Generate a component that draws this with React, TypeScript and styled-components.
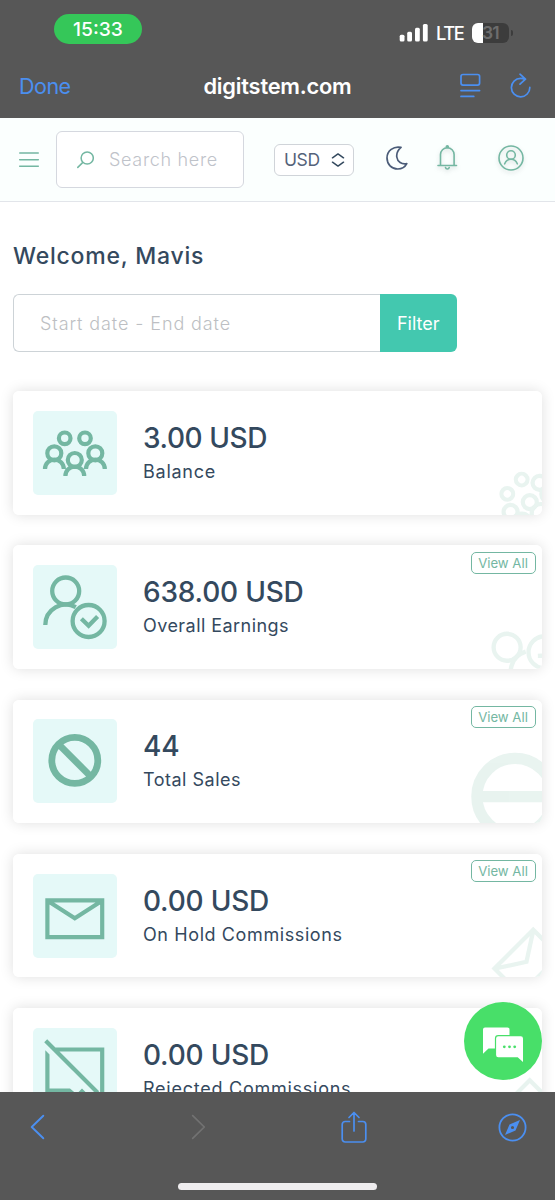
import React from "react";
import styled, { createGlobalStyle } from "styled-components";

const GlobalStyle = createGlobalStyle`
  *, *::before, *::after { box-sizing: border-box; }
  body { margin: 0; background: #fff; font-family: Inter, "Liberation Sans", sans-serif; }
  svg { display: block; flex: none; }
`;

const navy = "#34495e";
const sage = "#74b7a2";
const blue = "#4b8ff0";
const chrome = "#575757";

const Screen = styled.div`
  width: 555px;
  height: 1200px;
  display: flex;
  flex-direction: column;
  overflow: hidden;
  position: relative;
`;

const TopChrome = styled.header`
  height: 118px;
  flex: none;
  background: ${chrome};
  color: #fff;
`;

const StatusBar = styled.div`
  height: 58px;
  padding: 14px 42px 0 54px;
  display: flex;
  justify-content: space-between;
  align-items: flex-start;
`;

const TimePill = styled.div`
  width: 88px;
  height: 30px;
  border-radius: 15px;
  background: #35c759;
  font-size: 19.3px;
  font-weight: 500;
  line-height: 30px;
  text-align: center;
`;

const StatusRight = styled.div`
  display: flex;
  align-items: center;
  height: 20px;
  margin-top: 9px;
`;

const Network = styled.span`
  width: 27px;
  margin: 0 9px 0 8px;
  font-size: 18.3px;
  font-weight: 500;
  line-height: 20px;
  letter-spacing: -1.4px;
  white-space: nowrap;
`;

const Battery = styled.div`
  width: 37px;
  height: 20px;
  border-radius: 6px;
  background: linear-gradient(to right, #fff 0 11.5px, #3c3c3c 11.5px);
  color: #6d6d6d;
  font-size: 17.5px;
  font-weight: 600;
  line-height: 20px;
  padding-left: 10px;
  letter-spacing: -0.8px;
`;

const BatteryNub = styled.div`
  width: 2px;
  height: 6px;
  margin-left: 2px;
  border-radius: 0 2px 2px 0;
  background: #3c3c3c;
`;

const AddressRow = styled.div`
  height: 56px;
  padding: 0 24px 0 19px;
  display: grid;
  grid-template-columns: 147px 1fr 147px;
  align-items: center;
`;

const Done = styled.span`
  color: ${blue};
  font-size: 21.5px;
  letter-spacing: -0.5px;
`;

const Domain = styled.span`
  font-size: 21.8px;
  font-weight: 600;
  text-align: center;
  letter-spacing: -0.2px;
  padding-left: 5px;
`;

const AddressActions = styled.div`
  display: flex;
  justify-content: flex-end;
  align-items: center;
  gap: 29px;
`;

const Nav = styled.nav`
  height: 84px;
  flex: none;
  background: #fbfffe;
  border-bottom: 1.5px solid #e2e5ea;
  display: flex;
  align-items: center;
  padding-left: 19px;
`;

const SearchBox = styled.div`
  width: 188px;
  height: 57px;
  margin-left: 17px;
  padding-left: 20px;
  display: flex;
  align-items: center;
  gap: 15px;
  border: 1.3px solid #d5d8df;
  border-radius: 6px;
  background: #fff;
  color: #bfc3ca;
  font-size: 18px;
  font-weight: 300;
  letter-spacing: 0.68px;
`;

const Currency = styled.div`
  width: 80px;
  height: 32px;
  margin: 0 32px 0 30px;
  padding: 0 8px 0 9px;
  display: flex;
  align-items: center;
  justify-content: space-between;
  border: 1.3px solid #d0d4d9;
  border-radius: 6px;
  background: #fff;
  color: #55637a;
  font-size: 17.5px;
  letter-spacing: -0.4px;
`;

const NavIcon = styled.div<{ $gap?: number; $shadow?: boolean }>`
  margin-left: ${(p) => p.$gap ?? 0}px;
  margin-bottom: 4px;
  filter: ${(p) => (p.$shadow ? "drop-shadow(0 2px 2px rgba(80,100,100,.22))" : "none")};
`;

const Main = styled.main`
  height: 890px;
  flex: none;
  overflow: hidden;
  background: #fff;
  padding: 39px 13px 0;
`;

const Welcome = styled.h1`
  margin: 0;
  height: 30px;
  line-height: 30px;
  font-size: 23px;
  font-weight: 500;
  letter-spacing: 0.78px;
  color: ${navy};
`;

const FilterGroup = styled.div`
  display: flex;
  width: 443.5px;
  height: 58px;
  margin: 23px 0 39.3px;
`;

const DateInput = styled.div`
  flex: 1;
  border: 1.3px solid #cdd3d7;
  border-right: 0;
  border-radius: 6px 0 0 6px;
  padding-left: 26px;
  line-height: 57px;
  font-size: 18px;
  font-weight: 300;
  letter-spacing: 0.9px;
  color: #bdbfc3;
`;

const FilterButton = styled.button`
  width: 76.5px;
  padding: 2px 0 0;
  border: 0;
  border-radius: 0 6px 6px 0;
  background: #43c8af;
  color: #fff;
  font: 400 18px/56px Inter, sans-serif;
`;

const CardList = styled.div`
  display: flex;
  flex-direction: column;
  gap: 30.6px;
`;

const Card = styled.section`
  position: relative;
  height: 123.6px;
  flex: none;
  border-radius: 6px;
  overflow: hidden;
  background: #fff;
  display: flex;
  align-items: center;
  padding-left: 19.5px;
  gap: 26.5px;
`;

const CardShadow = styled.div`
  border-radius: 6px;
  box-shadow: 0 0 14px rgba(0, 0, 0, 0.13);
`;

const Tile = styled.div`
  width: 84px;
  height: 84px;
  border-radius: 5px;
  background: #e5f9f8;
  color: ${sage};
`;

const Amount = styled.div<{ $spacing?: number }>`
  height: 38px;
  line-height: 37px;
  font-size: 28px;
  font-weight: 500;
  letter-spacing: ${(p) => p.$spacing ?? -0.2}px;
  color: ${navy};
`;

const Label = styled.div<{ $spacing?: number }>`
  height: 28px;
  line-height: 28px;
  font-size: 18px;
  letter-spacing: ${(p) => p.$spacing ?? 0}px;
  color: ${navy};
  white-space: nowrap;
`;

const ViewAll = styled.button`
  position: absolute;
  top: 6.5px;
  right: 6.5px;
  width: 65px;
  height: 22px;
  padding: 1px 0 0;
  border: 1.3px solid ${sage};
  border-radius: 5px;
  background: #fff;
  color: ${sage};
  font: 400 13.2px/19px Inter, sans-serif;
`;

const Ghost = styled.div<{ $big?: boolean }>`
  position: absolute;
  right: ${(p) => (p.$big ? -15.5 : -24.7)}px;
  bottom: ${(p) => (p.$big ? -15.5 : -24.5)}px;
  color: ${sage};
  opacity: 0.16;
  transform: rotate(-45deg) scale(${(p) => (p.$big ? 1.66 : 1)});
`;

const ChatButton = styled.button`
  position: absolute;
  left: 464px;
  top: 1001.5px;
  width: 78px;
  height: 78px;
  padding: 0;
  border: 0;
  border-radius: 50%;
  background: #48df69;
`;

const BottomChrome = styled.footer`
  height: 108px;
  flex: none;
  background: ${chrome};
  display: flex;
  flex-direction: column;
  align-items: center;
  justify-content: space-between;
  padding: 18px 0 10.5px;
`;

const Toolbar = styled.div`
  width: 100%;
  height: 34px;
  padding: 0 28px 0 29px;
  display: grid;
  grid-template-columns: 162px 150px 1fr auto;
  align-items: center;
`;

const HomeIndicator = styled.div`
  width: 199px;
  height: 6.5px;
  border-radius: 4px;
  background: #efedef;
`;

type IconName = "people" | "verified" | "ban" | "mail" | "rejected";

const shapes: Record<IconName, React.ReactNode> = {
  people: (
    <g strokeWidth="4.2">
      <circle cx="31.7" cy="27.3" r="5.8" />
      <circle cx="52" cy="27.3" r="5.8" />
      <circle cx="21.3" cy="42.3" r="7" />
      <circle cx="62.3" cy="42.3" r="7" />
      <circle cx="41.8" cy="49" r="7" />
      <path d="M12 58a9.4 9.4 0 0 1 18.8 0M53 58a9.4 9.4 0 0 1 18.8 0M32.4 65a9.4 9.4 0 0 1 18.8 0" />
    </g>
  ),
  verified: (
    <g strokeWidth="4.3">
      <circle cx="32.7" cy="26" r="13.5" />
      <path d="M12.3 60a20.5 20.5 0 0 1 30.5-17.8" />
      <circle cx="55.6" cy="56" r="16" />
      <path d="M48.4 53.8l7.2 7 9-9.4" />
    </g>
  ),
  ban: (
    <g strokeWidth="6.8">
      <circle cx="41.8" cy="41.4" r="23" />
      <path d="M25.5 25.2l32.4 32.4" />
    </g>
  ),
  mail: (
    <g strokeWidth="4.2">
      <path d="M14.4 26.4h54.8v36.8H14.4zM14.9 27l26.9 17.3L68.7 27" />
    </g>
  ),
  rejected: (
    <g>
      <path d="M12.7 12.7l52 52M22 21.500h47.200v46" strokeWidth="4.200" />
      <path
        d="M12.300 22.300l4.200 4.200v34h20.500l6.500 5.500 5.500-5.500 8 8H12.300z"
        fill="currentColor"
        stroke="none"
      />
    </g>
  ),
};

const StatIcon = ({ name }: { name: IconName }) => (
  <svg width="84" height="84" viewBox="0 0 84 84" fill="none" stroke="currentColor">
    {shapes[name]}
  </svg>
);

interface Stat {
  icon: IconName;
  amount: string;
  label: string;
  viewAll?: boolean;
  amountSpacing?: number;
  labelSpacing?: number;
}

const stats: Stat[] = [
  { icon: "people", amount: "3.00 USD", label: "Balance", amountSpacing: -0.4, labelSpacing: 0.75 },
  { icon: "verified", amount: "638.00 USD", label: "Overall Earnings", viewAll: true, labelSpacing: 0.45 },
  { icon: "ban", amount: "44", label: "Total Sales", viewAll: true, labelSpacing: 0.5 },
  { icon: "mail", amount: "0.00 USD", label: "On Hold Commissions", viewAll: true, labelSpacing: 0.6 },
  { icon: "rejected", amount: "0.00 USD", label: "Rejected Commissions", labelSpacing: 0.75 },
];

const StatCard = ({ stat }: { stat: Stat }) => (
  <CardShadow>
    <Card>
      <Tile><StatIcon name={stat.icon} /></Tile>
      <div>
        <Amount $spacing={stat.amountSpacing}>{stat.amount}</Amount>
        <Label $spacing={stat.labelSpacing}>{stat.label}</Label>
      </div>
      {stat.viewAll && <ViewAll>View All</ViewAll>}
      <Ghost $big={stat.icon === "ban"}><StatIcon name={stat.icon} /></Ghost>
    </Card>
  </CardShadow>
);

const stroke = { fill: "none", strokeLinecap: "round", strokeLinejoin: "round" } as const;

export default function App() {
  return (
    <>
      <GlobalStyle />
      <Screen>
        <TopChrome>
          <StatusBar>
            <TimePill>15:33</TimePill>
            <StatusRight>
              <svg width="29" height="18" viewBox="0 0 29 18" fill="#fff">
                <rect x="0.7" y="10.7" width="4.800" height="6.800" rx="1.500" />
                <rect x="8.200" y="7.800" width="4.800" height="9.700" rx="1.500" />
                <rect x="16" y="3.800" width="4.800" height="13.700" rx="1.500" />
                <rect x="23.900" y="0" width="4.800" height="17.500" rx="1.500" />
              </svg>
              <Network>LTE</Network>
              <Battery>31</Battery>
              <BatteryNub />
            </StatusRight>
          </StatusBar>
          <AddressRow>
            <Done>Done</Done>
            <Domain>digitstem.com</Domain>
            <AddressActions>
              <svg width="21" height="26" viewBox="0 0 21 26" stroke={blue} strokeWidth="1.7" {...stroke}>
                <rect x="1" y="1.500" width="18.600" height="10.600" rx="2" />
                <path d="M1 17.600h18.600M1 23.400h12.800" />
              </svg>
              <svg width="21" height="26" viewBox="0 0 21 26" stroke={blue} strokeWidth="1.7" {...stroke}>
                <path d="M19.800 14.400a9.200 9.200 0 1 1-9.200-9c1.600 0 3 .2 4.400.9M10 1.200l5.500 5-5.500 5" />
              </svg>
            </AddressActions>
          </AddressRow>
        </TopChrome>

        <Nav>
          <svg width="20" height="16" viewBox="0 0 20 16" stroke={sage} strokeWidth="1.5" {...stroke}>
            <path d="M.7 1h18.600M.7 7.700h18.600M.7 14.200h18.600" />
          </svg>
          <SearchBox>
            <svg width="17" height="18" viewBox="0 0 17 18" stroke={sage} strokeWidth="1.500" {...stroke}>
              <circle cx="10.200" cy="7" r="6.100" />
              <path d="M5.600 11.600L.8 16.400" />
            </svg>
            Search here
          </SearchBox>
          <Currency>
            USD
            <svg width="14" height="14" viewBox="0 0 14 14" stroke="#34495e" strokeWidth="1.500" {...stroke}>
              <path d="M1.500 4.800L7 .9l5.500 3.900M1.500 9.200L7 13.100l5.500-3.900" />
            </svg>
          </Currency>
          <NavIcon>
            <svg width="22" height="24" viewBox="0 0 22 24" stroke="#4b5c78" strokeWidth="1.700" {...stroke}>
              <path d="M15 1.400C7.500-.2 1 4.800 1 12c0 6.200 4.600 11 10.800 11 4 0 7.300-2 9-5.300-5.200 1-9.300-1.800-10-6.700C10.300 7 12 4 15 1.400z" />
            </svg>
          </NavIcon>
          <NavIcon $gap={29} $shadow>
            <svg width="21" height="26" viewBox="0 0 21 26" stroke={sage} strokeWidth="1.600" {...stroke}>
              <path d="M1 20.500h18.500M3.500 20.500v-11a6.800 6.800 0 0 1 13.600 0v11M8.500 22.500a1.900 1.900 0 0 0 3.700 0" />
              <circle cx="10.300" cy="1.800" r="1" fill={sage} />
            </svg>
          </NavIcon>
          <NavIcon $gap={40} $shadow>
            <svg width="26" height="26" viewBox="0 0 26 26" stroke={sage} strokeWidth="1.600" {...stroke}>
              <circle cx="13" cy="13" r="12" />
              <circle cx="13" cy="10" r="4.300" />
              <path d="M6.700 18.800c1.200-3 3.500-4.500 6.300-4.500s5.100 1.500 6.300 4.500" />
            </svg>
          </NavIcon>
        </Nav>

        <Main>
          <Welcome>Welcome, Mavis</Welcome>
          <FilterGroup>
            <DateInput>Start date - End date</DateInput>
            <FilterButton>Filter</FilterButton>
          </FilterGroup>
          <CardList>
            {stats.map((s) => <StatCard key={s.label} stat={s} />)}
          </CardList>
        </Main>

        <BottomChrome>
          <Toolbar>
            <svg width="16" height="26" viewBox="0 0 16 26" stroke={blue} strokeWidth="1.900" {...stroke}>
              <path d="M14.300 1.700L2.700 13l11.600 11.300" />
            </svg>
            <svg width="16" height="26" viewBox="0 0 16 26" stroke="#727272" strokeWidth="1.700" {...stroke}>
              <path d="M1.700 1.700L13.300 13 1.700 24.300" />
            </svg>
            <svg width="26" height="33" viewBox="0 0 26 33" stroke={blue} strokeWidth="1.700" {...stroke}>
              <path d="M8.500 10.500H4.200a3 3 0 0 0-3 3V28a3 3 0 0 0 3 3h17.600a3 3 0 0 0 3-3V13.500a3 3 0 0 0-3-3h-4.300M13 20V1.500M8 6.500l5-5 5 5" />
            </svg>
            <svg width="29" height="29" viewBox="0 0 29 29" fill="none">
              <circle cx="14.500" cy="14.500" r="13.100" stroke={blue} strokeWidth="1.800" />
              <path fill={blue} fillRule="evenodd" d="M22 7l-4.500 10.500L7 22l4.500-10.500zM14.500 12.900a1.600 1.600 0 1 0 0 3.200 1.600 1.600 0 0 0 0-3.200z" />
            </svg>
          </Toolbar>
          <HomeIndicator />
        </BottomChrome>

        <ChatButton aria-label="Chat">
          <svg width="78" height="78" viewBox="0 0 78 78" fill="#fff">
            <path d="M21 25.500h22.500a2 2 0 0 1 2 2V46.500H24.500L19 51.800V27.500a2 2 0 0 1 2-2z" />
            <path d="M34.300 34.300h22.500a2.200 2.200 0 0 1 2.200 2.200v23.600l-5.300-4.800H34.300a2.200 2.200 0 0 1-2.200-2.200V36.500a2.200 2.200 0 0 1 2.200-2.200z" stroke="#48df69" strokeWidth="2.400" paintOrder="stroke" />
            <g fill="#48df69">
              <circle cx="40.300" cy="44.800" r="1.400" />
              <circle cx="45.500" cy="44.800" r="1.400" />
              <circle cx="50.700" cy="44.800" r="1.400" />
            </g>
          </svg>
        </ChatButton>
      </Screen>
    </>
  );
}
